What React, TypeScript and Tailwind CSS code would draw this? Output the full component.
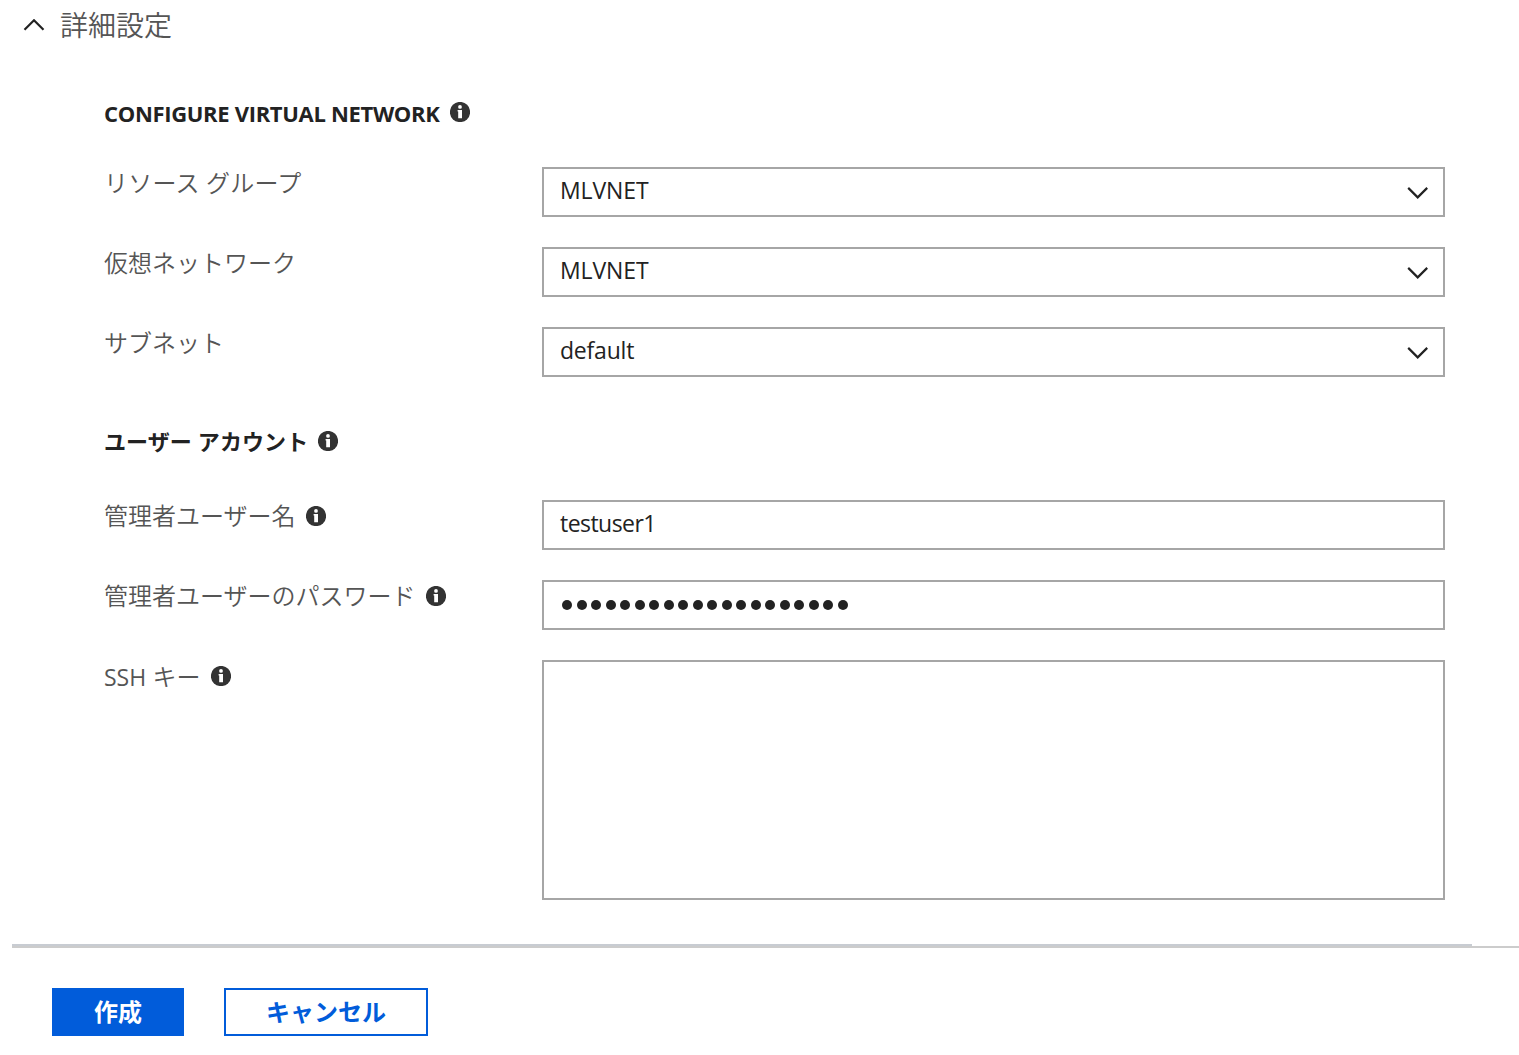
import React from "react";

function InfoIcon({ className = "" }: { className?: string }) {
  return (
    <svg className={`h-5 w-5 shrink-0 ${className}`} viewBox="0 0 20 20">
      <circle cx="10" cy="10" r="10.1" fill="#333333" />
      <circle cx="10" cy="4.9" r="1.9" fill="#ffffff" />
      <path d="M7.6 8H12V16.2H8.2V9.6H7.6Z" fill="#ffffff" />
    </svg>
  );
}

function Chevron({ up = false }: { up?: boolean }) {
  return (
    <svg className="h-3 w-[22px] shrink-0" viewBox="0 0 22 12" fill="none">
      <path d={up ? "M1.5 10.8L11 1.3L20.5 10.8" : "M1.2 0.9L10.7 10.4L20.2 0.9"} stroke="#222222" strokeWidth="2.2" />
    </svg>
  );
}

interface LabelProps {
  text: React.ReactNode;
  info?: boolean;
  className?: string;
}

function Label({ text, info, className = "" }: LabelProps) {
  return (
    <div className="flex h-8 w-[438px] items-center text-[24px] leading-8 font-[350] text-[#555555]">
      <span className={`whitespace-nowrap ${className}`}>{text}</span>
      {info && <InfoIcon className="ml-[10px]" />}
    </div>
  );
}

interface SelectRowProps {
  label: string;
  value: string;
  labelClass?: string;
  valueClass: string;
}

function SelectRow({ label, value, labelClass, valueClass }: SelectRowProps) {
  return (
    <div className="flex h-[50px]">
      <Label text={label} className={labelClass} />
      <div className="flex h-[50px] w-[903px] items-center justify-between border-2 border-[#a6a6a6] pr-[14px] pl-4">
        <span className={`-mt-1 text-[23px] leading-8 text-[#222222] ${valueClass}`}>{value}</span>
        <span className="mt-0.5">
          <Chevron />
        </span>
      </div>
    </div>
  );
}

export default function App() {
  return (
    <main className="flex h-[1055px] w-[1519px] flex-col overflow-hidden bg-white font-['Open_Sans','Noto_Sans_CJK_JP',sans-serif]">
      <header className="flex h-[50px] items-center gap-[15px] pl-[23px]">
        <Chevron up />
        <h1 className="text-[28px] leading-[50px] font-[350] text-[#555555]">詳細設定</h1>
      </header>

      <section className="ml-[104px] flex flex-col">
        <h2 className="mt-[46px] flex h-8 items-center text-[22px] leading-8 font-bold text-[#222222]">
          <span className="w-[336px] pt-0.5 tracking-[-0.32px] whitespace-nowrap">CONFIGURE VIRTUAL NETWORK</span>
          <InfoIcon className="ml-[10px]" />
        </h2>
        <div className="mt-[39px] flex flex-col gap-[30px]">
          <SelectRow label="リソース グループ" value="MLVNET" labelClass="tracking-[0.2px]" valueClass="tracking-[-0.1px]" />
          <SelectRow label="仮想ネットワーク" value="MLVNET" valueClass="tracking-[-0.1px]" />
          <SelectRow label="サブネット" value="default" valueClass="tracking-[-0.2px]" />
        </div>

        <h2 className="mt-12 flex h-8 items-center text-[22px] leading-8 font-bold text-[#222222]">
          <span className="w-[204px] tracking-[0.1px] whitespace-nowrap">ユーザー アカウント</span>
          <InfoIcon className="ml-[10px]" />
        </h2>
        <div className="mt-[43px] flex flex-col gap-[30px]">
          <div className="flex h-[50px]">
            <Label text="管理者ユーザー名" info />
            <div className="flex h-[50px] w-[903px] items-center border-2 border-[#a6a6a6] px-4">
              <span className="-mt-1 text-[23px] leading-8 tracking-[-0.55px] text-[#222222]">testuser1</span>
            </div>
          </div>
          <div className="flex h-[50px]">
            <Label text="管理者ユーザーのパスワード" info />
            <div className="flex h-[50px] w-[903px] items-center gap-[4.5px] border-2 border-[#a6a6a6] px-[18px]">
              {Array.from({ length: 20 }, (_, i) => (
                <span key={i} className="h-[10px] w-[10px] shrink-0 rounded-full bg-[#222222]" />
              ))}
            </div>
          </div>
          <div className="flex h-[240px]">
            <Label
              text={
                <>
                  <span className="text-[23px] font-normal">SSH</span> キー
                </>
              }
              info
              className="w-[97px] pt-0.5"
            />
            <div className="h-[240px] w-[903px] border-2 border-[#a6a6a6]" />
          </div>
        </div>
      </section>

      <div className="mt-11 ml-3 h-1">
        <div className="h-0.5 w-[1460px] bg-[#c8ccd2]" />
        <div className="h-0.5 bg-[#cccccc]" />
      </div>

      <footer className="mt-10 ml-[52px] flex gap-10 text-[24px] font-bold">
        <button className="h-12 w-[132px] bg-[#015cda] leading-[48px] text-white">作成</button>
        <button className="h-12 w-[204px] border-2 border-[#015cda] leading-[44px] text-[#015cda]">キャンセル</button>
      </footer>
    </main>
  );
}
